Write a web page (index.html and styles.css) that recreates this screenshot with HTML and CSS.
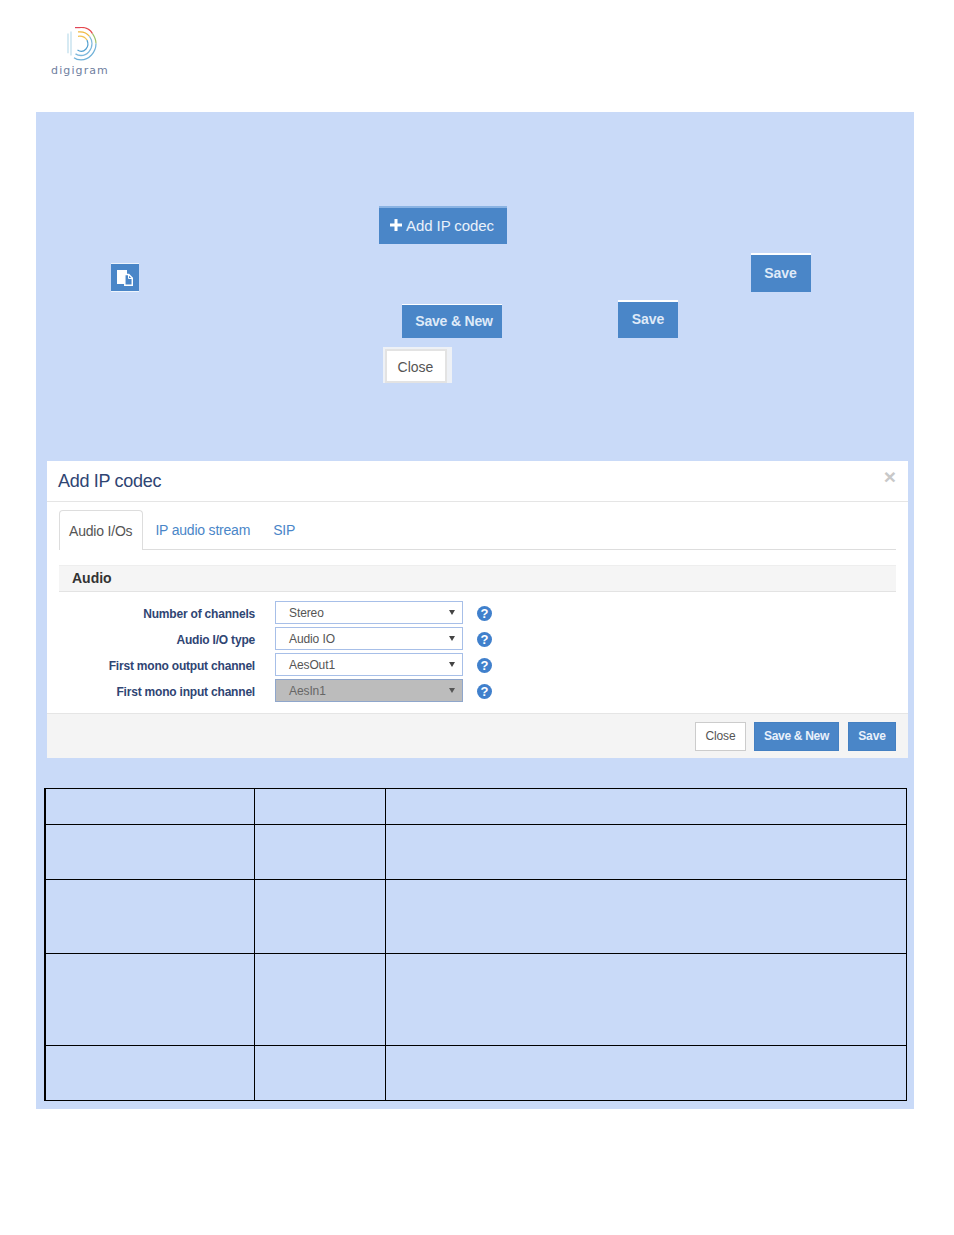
FILE: index.html
```html
<!DOCTYPE html>
<html lang="en">
<head>
<meta charset="utf-8">
<title>Add IP codec</title>
<link rel="stylesheet" href="styles.css">
</head>
<body>
<header class="page-header">
  <div class="logo">
    <svg class="logo-mark" width="30" height="34" viewBox="2 3 30 31" preserveAspectRatio="none" fill="none" stroke-width="1.2">
      <path d="M3 9v18M6 7v22" stroke="#bcdcec"/>
      <path d="M10 3.500h4" stroke="#e0455a"/>
      <path d="M14 3.500C20 3 25 5 27.500 9" stroke="#e5484d"/>
      <path d="M27.500 9C30 12.500 31 15 31 18" stroke="#9fc26a"/>
      <path d="M31 18C31 26 24 33 16 33 13 33 11 32.500 9 31" stroke="#6fb1d8"/>
      <path d="M13 7.500C18 7 22 8.500 24.500 11.500" stroke="#f0b840"/>
      <path d="M24.500 11.500C26.500 14 27 16 27 18 27 24 22 29 16 29 14 29 12 28.500 10.500 27.500" stroke="#7db8dc"/>
      <path d="M13 11.500C17 11 20 12 22 15" stroke="#f2c14e"/>
      <path d="M22 15C23.500 18 23 21 21 23 18.500 25.500 15 25.500 12.500 24" stroke="#4f9fd0"/>
    </svg>
    <span class="logo-text">digigram</span>
  </div>
</header>
<main class="sheet">
  <section class="canvas">
    <button class="btn btn-primary shot shot-add"><svg class="plus" width="12" height="12" viewBox="0 0 12 12"><path d="M4.500 0h3v4.500H12v3H7.500V12h-3V7.500H0v-3h4.500z" fill="#fff"/></svg>Add IP codec</button>
    <button class="btn btn-primary shot shot-copy" aria-label="Copy"><svg width="16" height="16" viewBox="0 0 16 16"><path d="M0 0h10v14H0z" fill="#fff"/><path d="M7.800 4.500h4l3.500 3.500v7.300H7.800z" fill="#4a86c8" stroke="#fff" stroke-width="1.500"/><path d="M11.500 5v3.500H15" fill="none" stroke="#fff" stroke-width="1"/></svg></button>
    <button class="btn btn-primary shot shot-save-a">Save</button>
    <button class="btn btn-primary shot shot-save-new">Save &amp; New</button>
    <button class="btn btn-primary shot shot-save-b">Save</button>
    <button class="btn shot shot-close">Close</button>
  </section>

  <section class="modal">
    <div class="modal-head">
      <h2 class="modal-title">Add IP codec</h2>
      <span class="modal-x">×</span>
    </div>
    <div class="modal-body">
      <div class="tabs">
        <span class="tab tab-active">Audio I/Os</span>
        <span class="tab">IP audio stream</span>
        <span class="tab">SIP</span>
      </div>
      <div class="group-title">Audio</div>
      <div class="form">
        <div class="row">
          <label class="row-label">Number of channels</label>
          <div class="select"><span>Stereo</span><i class="caret"></i></div>
          <span class="help">?</span>
        </div>
        <div class="row">
          <label class="row-label">Audio I/O type</label>
          <div class="select"><span>Audio IO</span><i class="caret"></i></div>
          <span class="help">?</span>
        </div>
        <div class="row">
          <label class="row-label">First mono output channel</label>
          <div class="select"><span>AesOut1</span><i class="caret"></i></div>
          <span class="help">?</span>
        </div>
        <div class="row">
          <label class="row-label">First mono input channel</label>
          <div class="select select-disabled"><span>AesIn1</span><i class="caret"></i></div>
          <span class="help">?</span>
        </div>
      </div>
    </div>
    <div class="modal-foot">
      <button class="btn btn-small">Close</button>
      <button class="btn btn-small btn-primary">Save &amp; New</button>
      <button class="btn btn-small btn-primary">Save</button>
    </div>
  </section>

  <table class="grid">
    <tbody>
      <tr class="r1"><td></td><td></td><td></td></tr>
      <tr class="r2"><td></td><td></td><td></td></tr>
      <tr class="r3"><td></td><td></td><td></td></tr>
      <tr class="r4"><td></td><td></td><td></td></tr>
      <tr class="r5"><td></td><td></td><td></td></tr>
    </tbody>
  </table>
</main>
</body>
</html>
```
FILE: styles.css
```css
* { box-sizing: border-box; }
html, body { margin: 0; padding: 0; }
body {
  width: 954px;
  height: 1235px;
  background: #fff;
  font-family: "Liberation Sans", Arial, sans-serif;
  overflow: hidden;
}
.page-header { height: 112px; padding: 27px 0 0 51px; }
.logo { width: 58px; display: flex; flex-direction: column; align-items: center; }
.logo-mark { margin-left: 3px; display: block; }
.logo-text {
  margin-top: 3px;
  font-family: "DejaVu Sans", sans-serif;
  font-size: 11px;
  line-height: 13px;
  letter-spacing: 1.100px;
  color: #6f80a0;
  white-space: nowrap;
}
.sheet {
  width: 878px;
  height: 997px;
  margin-left: 36px;
  background: #c9daf8;
  padding-left: 8px;
}
.canvas { position: relative; height: 349px; margin-left: -8px; }
.btn {
  font-family: "Liberation Sans", Arial, sans-serif;
  border: 1px solid #ccc;
  background: #fff;
  color: #555;
  padding: 0;
  margin: 0;
  display: inline-flex;
  align-items: center;
  justify-content: center;
  white-space: nowrap;
}
.btn-primary { background: #4a86c8; border-color: #4480c2; color: #e9f1fb; }
.shot { position: absolute; font-size: 14px; font-weight: 400; }
.shot-add { left: 343px; top: 94px; width: 128px; height: 38px; border: 0; border-top: 2px solid #8ab3e3; font-size: 15px; letter-spacing: -0.100px; padding: 0 2px 2px 0; }
.plus { margin-right: 4px; }
.shot-copy { left: 75px; top: 151px; width: 28px; height: 29px; border: 0; border-top: 1px solid #eef4fc; border-bottom: 1px solid #eef4fc; }
.shot-save-a { left: 715px; top: 141px; width: 60px; height: 39px; border: 0; border-top: 2px solid #fff; font-weight: 700; font-size: 14px; color: #dfeaf8; padding-bottom: 2px; padding-right: 1px; }
.shot-save-new { left: 366px; top: 192px; width: 100px; height: 34px; border: 0; border-top: 1px solid #fff; font-weight: 700; font-size: 14px; letter-spacing: -0.200px; color: #dfeaf8; padding-left: 4px; padding-bottom: 1px; }
.shot-save-b { left: 582px; top: 188px; width: 60px; height: 38px; border: 0; border-top: 2px solid #fff; font-weight: 700; font-size: 14px; color: #dfeaf8; padding-bottom: 3px; }
.shot-close {
  left: 347px;
  top: 235px;
  width: 69px;
  height: 36px;
  padding: 2px 1px 0 0;
  border-style: solid;
  border-color: #eef1f6;
  border-width: 2px 5px 0 2px;
  box-shadow: inset 0 0 0 2px #e3e3e3;
  font-size: 14px;
}

.modal { width: 861px; height: 297px; margin-left: 3px; background: #fff; display: flex; flex-direction: column; }
.modal-head {
  height: 41px;
  padding: 0 12px 0 11px;
  border-bottom: 1px solid #e5e5e5;
  display: flex;
  justify-content: space-between;
  align-items: flex-start;
}
.modal-title { margin: 10px 0 0; font-size: 18px; letter-spacing: -0.300px; line-height: 20px; font-weight: 400; color: #2f4573; }
.modal-x { margin: 4px 0 0 0; font-size: 21px; line-height: 24px; font-weight: 700; color: #c8c8c8; }
.modal-body { flex: 1; padding: 8px 12px 0; }
.tabs { display: flex; height: 40px; border-bottom: 1px solid #ddd; font-size: 14px; letter-spacing: -0.200px; }
.tab { padding: 12px 11px 0 12px; height: 39px; color: #4a86c8; line-height: 16px; }
.tab + .tab { padding-left: 12px; padding-right: 11px; }
.tab-active {
  height: 40px;
  padding: 12px 10px 0 9px;
  color: #555;
  background: #fff;
  border: 1px solid #ddd;
  border-bottom: 0;
  border-radius: 4px 4px 0 0;
}
.group-title {
  height: 27px;
  margin-top: 15px;
  padding: 4px 0 0 13px;
  background: #f5f5f5;
  border-top: 1px solid #eee;
  border-bottom: 1px solid #e3e3e3;
  font-size: 14px;
  line-height: 16px;
  font-weight: 700;
  color: #333;
}
.form { padding-top: 9px; display: flex; flex-direction: column; gap: 4px; }
.row { display: flex; align-items: center; height: 22px; }
.row-label { width: 196px; padding-top: 3px; text-align: right; font-size: 12px; letter-spacing: -0.200px; font-weight: 700; color: #2f4573; }
.select {
  width: 188px;
  height: 23px;
  margin-left: 20px;
  padding: 0 6px 0 13px;
  border: 1px solid #a7bfe8;
  background: #fff;
  font-size: 12px;
  letter-spacing: -0.100px;
  color: #555;
  display: flex;
  align-items: center;
  justify-content: space-between;
}
.select span { padding-top: 1px; }
.select-disabled { background: #bcbcbc; border-color: #8fa6cb; color: #666; }
.caret { width: 0; height: 0; border-left: 3px solid transparent; border-right: 3px solid transparent; border-top: 5px solid #444; margin: 0 1px 0 0; }
.select-disabled .caret { border-top-color: #555; }
.help {
  width: 15px;
  height: 15px;
  margin: 2px 0 0 14px;
  border-radius: 50%;
  background: #4080cc;
  color: #fff;
  font-size: 13px;
  line-height: 15px;
  font-weight: 700;
  text-align: center;
}
.modal-foot {
  height: 45px;
  padding: 8px 12px 0;
  background: #f4f4f4;
  border-top: 1px solid #e5e5e5;
  display: flex;
  justify-content: flex-end;
  align-items: flex-start;
  gap: 8px;
}
.btn-small { height: 29px; font-size: 12px; padding-bottom: 1px; }
.btn-small:nth-child(1) { width: 51px; letter-spacing: -0.100px; }
.btn-small:nth-child(2) { width: 85px; font-weight: 700; letter-spacing: -0.300px; }
.btn-small:nth-child(3) { width: 48px; margin-left: 1px; font-weight: 700; letter-spacing: -0.100px; }

.grid {
  width: 863px;
  height: 313px;
  margin: 30px 0 0 0;
  border-collapse: collapse;
  table-layout: fixed;
  border-left: 2px solid #000;
}
.grid td { border: 1px solid #000; padding: 0; }
.grid td:first-child { width: 209px; border-left: 2px solid #000; }
.grid td:nth-child(2) { width: 131px; }
.r1 { height: 36px; }
.r2 { height: 55px; }
.r3 { height: 74px; }
.r4 { height: 92px; }
.r5 { height: 55px; }
```
